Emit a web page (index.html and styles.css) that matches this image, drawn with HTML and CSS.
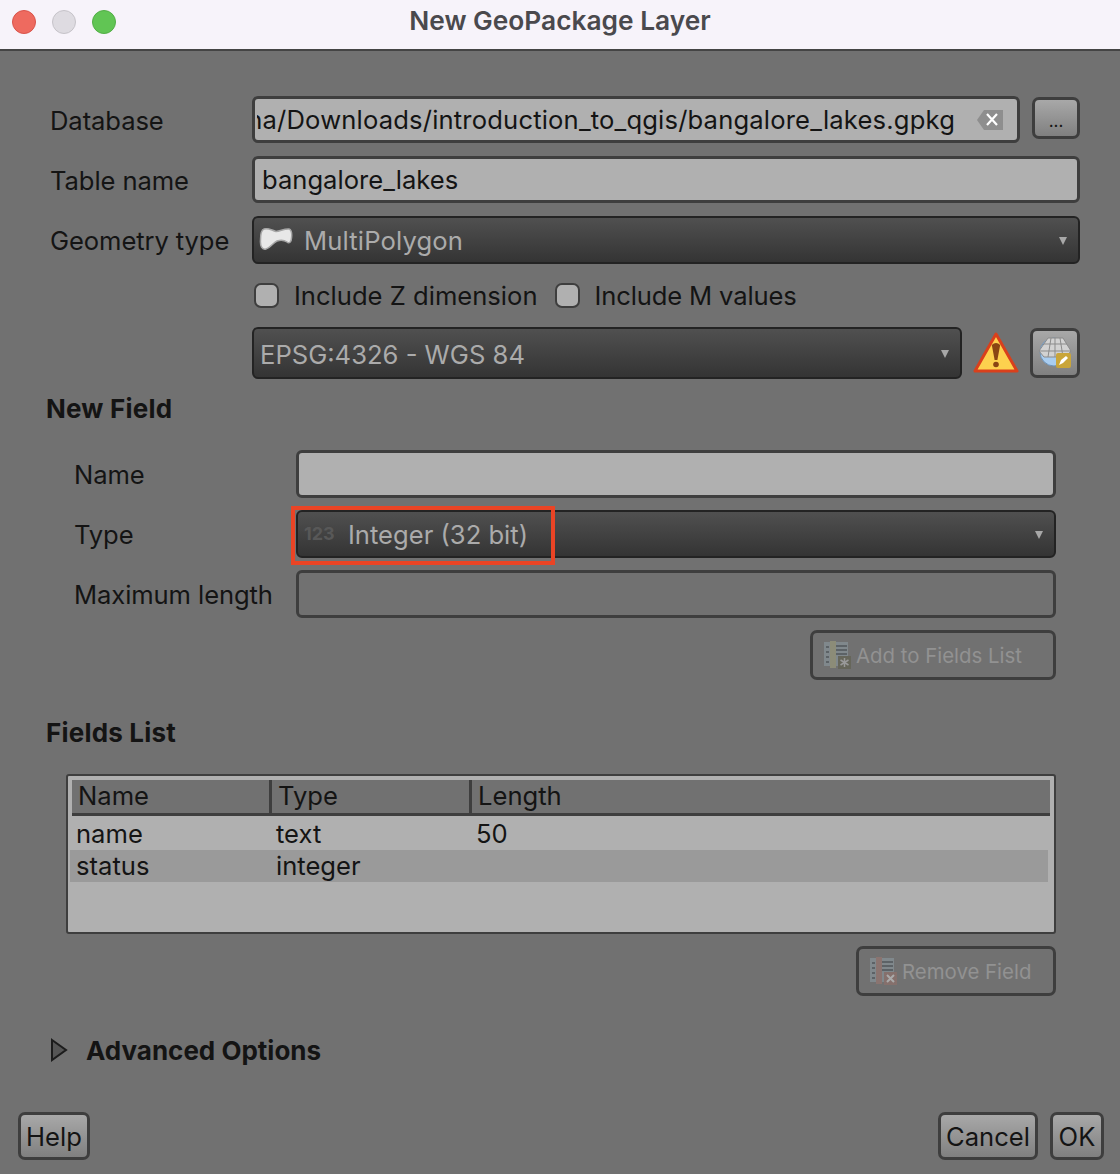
FILE: index.html
```html
<!DOCTYPE html>
<html lang="en">
<head>
<meta charset="UTF-8">
<title>New GeoPackage Layer</title>
<link rel="stylesheet" href="styles.css">
</head>
<body>
<div class="titlebar">
  <div class="lights">
    <span class="light red"></span>
    <span class="light grey"></span>
    <span class="light green"></span>
  </div>
  <div class="title">New GeoPackage Layer</div>
</div>

<div class="dialog">
  <div class="top-form">
    <div class="row row-db">
      <label>Database</label>
      <div class="field db-field">
        <span class="db-path"><span class="db-text">ha/Downloads/introduction_to_qgis/bangalore_lakes.gpkg</span></span>
        <svg class="clear-icon" width="26" height="20" viewBox="0 0 26 20">
          <path d="M0 10 L7 0 H26 V20 H7 Z" fill="#8e8e8e"/>
          <path d="M10 4 L20 15 M20 4 L10 15" stroke="#fff" stroke-width="2.2"/>
        </svg>
      </div>
      <button class="btn dots">...</button>
    </div>
    <div class="row row-table">
      <label>Table name</label>
      <div class="field">bangalore_lakes</div>
    </div>
    <div class="row row-geom">
      <label>Geometry type</label>
      <div class="combo">
        <svg class="geom-icon" width="34" height="24" viewBox="-1 -1 34 24">
          <path d="M4 1 C8 -0.5 11 2 16 3.5 C20 3.5 24 0.5 29 1 C32 2 32 6 31.5 10 C31.5 14 29 16 27 14 C24 12 20 12 17 13 C13 15 10 20 6 21 C2 22 0 18 0.5 12 C0.5 7 1 2 4 1 Z" fill="#e8e8e8" stroke="#a6a6a6" stroke-width="1.5"/>
        </svg>
        <span class="combo-text">MultiPolygon</span>
        <span class="arrow"></span>
      </div>
    </div>
    <div class="checks">
      <span class="check"></span><span class="check-label">Include Z dimension</span>
      <span class="check check-m"></span><span class="check-label">Include M values</span>
    </div>
    <div class="crs-row">
      <div class="combo crs-combo">
        <span class="crs-text">EPSG:4326 - WGS 84</span>
        <span class="arrow"></span>
      </div>
      <svg class="warn" width="46" height="42" viewBox="0 0 46 42">
        <path d="M23 2 L44 39 H2 Z" fill="#fdd14e" stroke="#d9401c" stroke-width="3" stroke-linejoin="round"/>
        <path d="M18.8 13 Q23 9 27.2 13 L24.4 28 H21.6 Z" fill="#8a4513"/>
        <circle cx="23" cy="32.5" r="2.8" fill="#8a4513"/>
      </svg>
      <button class="btn crs-btn">
        <svg width="38" height="36" viewBox="0 0 38 36">
          <circle cx="18" cy="17" r="14" fill="#a9cdf0" stroke="#6f93b8"/>
          <path d="M12 3 H27 L35 16 L30 22 H8 L3 16 Z" fill="#d2d2d2" stroke="#8b8b8b"/>
          <path d="M3 16 H35 M8 9 H31 M15 3 L12 22 M24 3 L27 22 M19 3 V22" stroke="#8b8b8b" fill="none"/>
          <rect x="20" y="18" width="15" height="15" rx="2" fill="#c9a53a"/>
          <path d="M23 30 L25 25 L30 21 L32 23 L27 28 Z" fill="#fff"/>
        </svg>
      </button>
    </div>
  </div>

  <h2 class="section new-field">New Field</h2>
  <div class="new-form">
    <div class="row row-new">
      <label>Name</label>
      <div class="field"></div>
    </div>
    <div class="row row-new">
      <label>Type</label>
      <div class="combo">
        <span class="num-icon">123</span>
        <span class="type-text">Integer (32 bit)</span>
        <span class="arrow"></span>
        <span class="highlight"></span>
      </div>
    </div>
    <div class="row row-new">
      <label>Maximum length</label>
      <div class="field field-off"></div>
    </div>
    <div class="action-row">
      <button class="btn-off add-btn">
        <svg width="28" height="28" viewBox="0 0 28 28">
          <rect x="1" y="1" width="24" height="24" fill="#80888c"/>
          <path d="M13 5 H24 M13 9 H24 M13 13 H24 M3 6 H6 M3 11 H6 M3 16 H6 M3 21 H6" stroke="#5c6266" stroke-width="2"/>
          <rect x="7" y="0" width="6" height="27" fill="#8c8c78"/>
          <rect x="15" y="15" width="13" height="13" fill="#66665a"/>
          <path d="M21.5 17 V26 M17.5 19 L25.5 24 M25.5 19 L17.5 24" stroke="#999" stroke-width="1.5"/>
        </svg>
        <span>Add to Fields List</span>
      </button>
    </div>
  </div>

  <h2 class="section fields-head">Fields List</h2>
  <div class="fields-table">
    <div class="thead">
      <span class="th">Name</span>
      <span class="th">Type</span>
      <span class="th">Length</span>
    </div>
    <div class="tr"><span>name</span><span>text</span><span>50</span></div>
    <div class="tr tr-alt"><span>status</span><span>integer</span><span></span></div>
  </div>
  <div class="action-row remove-row">
    <button class="btn-off remove-btn">
      <svg width="28" height="28" viewBox="0 0 28 28">
        <rect x="1" y="1" width="24" height="24" fill="#80888c"/>
        <path d="M13 5 H24 M13 9 H24 M13 13 H24 M3 6 H6 M3 11 H6 M3 16 H6 M3 21 H6" stroke="#5c6266" stroke-width="2"/>
        <rect x="7" y="0" width="6" height="27" fill="#8a7470"/>
        <rect x="15" y="15" width="13" height="13" fill="#85706c"/>
        <path d="M18 18 L25 25 M25 18 L18 25" stroke="#aaa" stroke-width="2"/>
      </svg>
      <span>Remove Field</span>
    </button>
  </div>

  <div class="advanced">
    <svg width="18" height="24" viewBox="0 0 18 24">
      <path d="M2 2 L16 12 L2 22 Z" fill="#555" stroke="#1c1c1c" stroke-width="2"/>
    </svg>
    <span>Advanced Options</span>
  </div>

  <div class="footer">
    <button class="btn help">Help</button>
    <div class="footer-right">
      <button class="btn cancel">Cancel</button>
      <button class="btn ok">OK</button>
    </div>
  </div>
</div>
</body>
</html>
```

FILE: styles.css
```css
* {
  box-sizing: border-box;
}

html, body {
  margin: 0;
  height: 100%;
}

body {
  width: 1120px;
  height: 1174px;
  overflow: hidden;
  background-color: #717171;
  font-family: 'Inter', 'Liberation Sans', sans-serif;
  font-size: 25.6px;
  color: #141414;
}

.titlebar {
  height: 51px;
  background-color: #f7f3fa;
  border-bottom: 2px solid #444;
  display: flex;
  align-items: center;
  position: relative;
}

.lights {
  display: flex;
  gap: 16px;
  padding-left: 12px;
  margin-top: -5px;
}

.light {
  width: 24px;
  height: 24px;
  border-radius: 50%;
}

.red {
  background-color: #ee6a5f;
  border: 1px solid #d9534a;
}

.grey {
  background-color: #dedbe1;
  border: 1px solid #c6c3c9;
}

.green {
  background-color: #61c554;
  border: 1px solid #52ae46;
}

.title {
  position: absolute;
  left: 0;
  right: 0;
  top: 5px;
  text-align: center;
  font-size: 26.3px;
  font-weight: 600;
  color: #4a494d;
}

.dialog {
  padding: 45px 40px 0 50px;
}

.row {
  display: grid;
  align-items: center;
  line-height: 1;
}

.row label {
  letter-spacing: -0.1px;
  padding-top: 2px;
}

.top-form .row {
  grid-template-columns: 202px 1fr;
  margin-bottom: 13px;
  height: 47px;
}

.row-db {
  grid-template-columns: 202px 768px 1fr !important;
}

.field {
  height: 47px;
  background-color: #b0b0b0;
  border: 3px solid #3e3e3e;
  border-radius: 6px;
  padding: 0 7px;
  display: flex;
  align-items: center;
}

.db-field {
  gap: 22px;
  padding-left: 2px;
  padding-right: 14px;
}

.db-path {
  flex: 1;
  overflow: hidden;
  display: flex;
  justify-content: flex-end;
  white-space: nowrap;
  line-height: 34px;
}

.db-text {
  flex-shrink: 0;
  letter-spacing: 0.17px;
}

.clear-icon {
  flex-shrink: 0;
}

.field-off {
  background-color: #717171;
}

.btn {
  border: 3px solid #3e3e3e;
  border-radius: 7px;
  background: linear-gradient(#a8a8a8, #808080);
  font-family: inherit;
  font-size: 25.6px;
  color: #141414;
  padding: 0;
}

.dots {
  width: 48px;
  height: 42px;
  margin-left: 12px;
  margin-top: -3px;
  padding-top: 5px;
  font-size: 17px;
}

.combo {
  height: 48px;
  position: relative;
  display: flex;
  align-items: center;
  background: linear-gradient(#505050, #343434);
  border: 2px solid #232323;
  border-radius: 6px;
  color: #ababab;
}

.combo-text, .crs-text, .type-text {
  padding-top: 2px;
}

.combo-text {
  letter-spacing: 0.15px;
}

.geom-icon {
  margin-left: 5px;
  margin-right: 11px;
  margin-top: -2px;
}

.arrow {
  position: absolute;
  right: 11px;
  top: 50%;
  margin-top: -3px;
  width: 0;
  height: 0;
  border-left: 4px solid transparent;
  border-right: 4px solid transparent;
  border-top: 8px solid #a8a8a8;
}

.checks {
  display: flex;
  align-items: center;
  height: 32px;
  margin: 16px 0 16px 204px;
}

.check {
  width: 25px;
  height: 25px;
  background-color: #b0b0b0;
  border: 2px solid #3e3e3e;
  border-radius: 7px;
  margin-right: 15px;
}

.check-m {
  margin-left: 17px;
}

.check-m + .check-label {
  letter-spacing: -0.15px;
}

.crs-row {
  display: flex;
  align-items: center;
  margin-left: 202px;
  height: 52px;
}

.crs-combo {
  width: 710px;
  height: 52px;
}

.crs-text {
  padding-left: 6px;
}

.warn {
  margin-left: 11px;
}

.crs-btn {
  width: 50px;
  height: 50px;
  margin-left: 11px;
  display: flex;
  align-items: center;
  justify-content: center;
}

.section {
  margin: 0 0 0 -4px;
  font-size: 26px;
  font-weight: 700;
  letter-spacing: 0.2px;
  line-height: 30px;
}

.new-field {
  margin-top: 15px;
}

.new-form {
  margin-top: 26px;
  padding-left: 24px;
  padding-right: 24px;
}

.row-new {
  grid-template-columns: 222px 1fr;
  height: 48px;
  margin-bottom: 12px;
}

.row-new .field {
  height: 48px;
}

.num-icon {
  margin-left: 6px;
  font-size: 18px;
  font-weight: 700;
  color: #585858;
  width: 44px;
}

.highlight {
  position: absolute;
  left: -7px;
  top: -6px;
  width: 264px;
  height: 59px;
  border: 4px solid #ea4425;
}

.action-row {
  display: flex;
  justify-content: flex-end;
}

.btn-off {
  display: flex;
  align-items: center;
  gap: 5px;
  height: 50px;
  border: 3px solid #3e3e3e;
  border-radius: 7px;
  background-color: #717171;
  font-family: inherit;
  font-size: 20.4px;
  color: #929292;
  padding: 0 10px;
}

.add-btn {
  width: 246px;
}

.fields-head {
  margin-top: 38px;
}

.fields-table {
  margin-top: 26px;
  margin-left: 16px;
  margin-right: 24px;
  height: 160px;
  background-color: #b0b0b0;
  border: 2px solid #3e3e3e;
  border-radius: 3px;
  padding: 4px;
}

.thead {
  display: grid;
  grid-template-columns: 200px 200px 1fr;
  height: 36px;
  background-color: #717171;
  border-bottom: 3px solid #3e3e3e;
}

.th {
  padding-left: 6px;
  line-height: 32px;
  border-right: 3px solid #3e3e3e;
}

.th:last-child {
  border-right: none;
}

.tr {
  display: grid;
  grid-template-columns: 200px 200px 1fr;
  height: 32px;
  line-height: 32px;
  margin-left: -2px;
  margin-right: 2px;
  padding-left: 6px;
}

.thead + .tr {
  margin-top: 2px;
}

.tr-alt {
  background-color: #9a9a9a;
}

.remove-row {
  margin-top: 12px;
  margin-right: 24px;
}

.remove-btn {
  width: 200px;
}

.advanced {
  display: flex;
  align-items: center;
  gap: 18px;
  margin-top: 39px;
  font-size: 26px;
  font-weight: 700;
  height: 30px;
}

.footer {
  display: flex;
  justify-content: space-between;
  margin: 47px -24px 0 -32px;
}

.footer .btn {
  height: 48px;
}

.footer-right {
  display: flex;
  gap: 12px;
}

.help {
  width: 72px;
}

.cancel {
  width: 100px;
}

.ok {
  width: 54px;
}
```
